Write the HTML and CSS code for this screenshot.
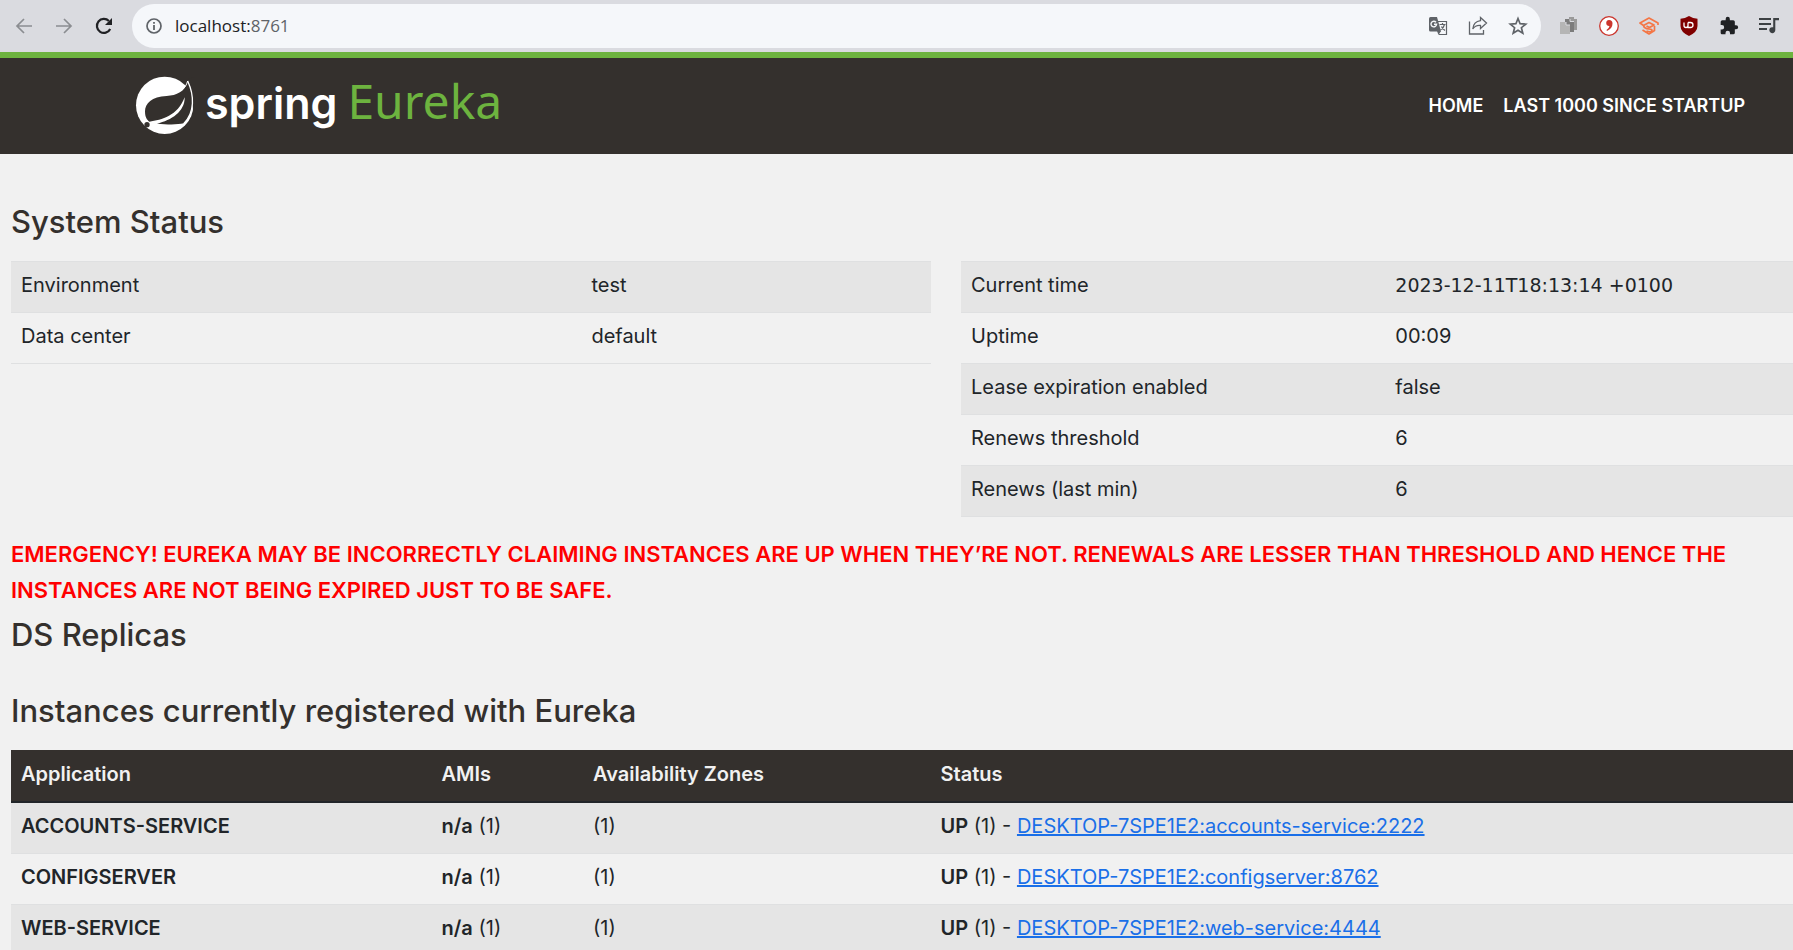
FILE: index.html
```html
<!DOCTYPE html>
<html lang="en">
<head>
<meta charset="utf-8">
<title>Eureka</title>
<link rel="stylesheet" href="styles.css">
</head>
<body>
<div class="browser-bar">
  <div class="nav-buttons">
    <button class="icon-btn" aria-label="Back"><svg width="20" height="20" viewBox="0 0 20 20" fill="none" stroke="#8b8d91" stroke-width="1.7"><path d="M18 10H3M10 3L3 10l7 7"/></svg></button>
    <button class="icon-btn" aria-label="Forward"><svg width="20" height="20" viewBox="0 0 20 20" fill="none" stroke="#8b8d91" stroke-width="1.7"><path d="M2 10h15M10 3l7 7-7 7"/></svg></button>
    <button class="icon-btn" aria-label="Reload"><svg width="20" height="20" viewBox="0 0 20 20"><path d="M16.2 13a7 7 0 1 1-1.3-8" fill="none" stroke="#202124" stroke-width="2.2"/><path d="M18 2v7h-7z" fill="#202124"/></svg></button>
  </div>
  <div class="address">
    <svg width="18" height="18" viewBox="0 0 18 18"><circle cx="9" cy="9" r="7" fill="none" stroke="#5f6368" stroke-width="1.7"/><path d="M8.1 8h1.8v5H8.1zM8.1 5h1.8v1.8H8.1z" fill="#5f6368"/></svg>
    <span class="url">localhost:<span class="port">8761</span></span>
    <div class="address-actions">
      <button class="icon-btn" aria-label="Translate"><svg width="20" height="20" viewBox="0 0 20 20"><path d="M9.5 5.500h9v13h-7.500" fill="none" stroke="#5f6368" stroke-width="1.200"/><path d="M2.500 1h6.500l4 14.500H2.500Q1 15.500 1 14v-11.500Q1 1 2.500 1z" fill="#5f6368"/><path d="M9 15h4l-2.500 4z" fill="#5f6368"/><path d="M8 6.300A2.800 2.800 0 1 0 8.600 8.300H6" fill="none" stroke="#f5f7fa" stroke-width="1.400"/><path d="M11.500 8.500h6M14.500 7v1.500M16.500 8.500q-1 4-4 5.500M13.500 10.500q1 2.500 3.500 4" fill="none" stroke="#5f6368" stroke-width="1.200"/></svg></button>
      <button class="icon-btn" aria-label="Share"><svg width="20" height="20" viewBox="0 0 20 20" fill="none" stroke="#5f6368" stroke-width="1.300"><path d="M1.500 5.500v12.500h14V14"/><path d="M12.500 1.500l6 5.500-6 5.500V9.500Q7.500 9 4.800 13 5.500 5.500 12.500 4.700z"/></svg></button>
      <button class="icon-btn" aria-label="Bookmark"><svg width="20" height="20" viewBox="0 0 20 20" fill="none" stroke="#5f6368" stroke-width="1.700"><path d="M10 2.500l2.100 5.200 5.600.4-4.300 3.600 1.400 5.500L10 14.200l-4.800 3 1.400-5.500L2.300 8.100l5.600-.4z"/></svg></button>
    </div>
  </div>
  <div class="extensions">
    <button class="icon-btn" aria-label="Pages"><svg width="20" height="20" viewBox="0 0 20 20"><path d="M10 1h5v2h3v11h-8z" fill="#9a9a9a"/><path d="M6 3h5v2h4v11H6z" fill="#7c7c7c"/><path d="M1 6h6v3h4v9H1z" fill="#b5b5b5"/><path d="M7 6v3h4M11 3v2.500h4" fill="none" stroke="#dadbe0"/></svg></button>
    <button class="icon-btn" aria-label="Comma"><svg width="20" height="20" viewBox="0 0 20 20"><circle cx="10" cy="10" r="9.300" fill="#fff" stroke="#cb352d" stroke-width="1.300"/><path d="M10 4a3 3 0 1 0 .5 6Q10 12.500 7.500 14l.5 1q5.500-2.500 5.500-7.500Q13.500 4 10 4z" fill="#cb352d"/></svg></button>
    <button class="icon-btn" aria-label="Scholar"><svg width="20" height="20" viewBox="0 0 20 20" fill="none" stroke="#f47645" stroke-width="1.700" stroke-linejoin="round"><path d="M19 9V7L10 2 1 7l3.500 2.500 5.500-3 5 2.500-4.500 2.500L7.500 10M4.500 9.500q.5 3 5.500 3.500 4 .2 2.500 2-1.500 1.500-5 0M3.500 14L10 18l5.500-3.500V10"/></svg></button>
    <button class="icon-btn" aria-label="Blocker"><svg width="20" height="20" viewBox="0 0 20 20"><path d="M10 0q4 2.500 8.500 2.800V10q0 6-8.500 10Q1.500 16 1.500 10V2.800Q6 2.500 10 0z" fill="#800000"/><path d="M5 6.500v3q0 2 2 2t2-2v-3v5h2.500a2.500 2.500 0 0 0 0-5H9" fill="none" stroke="#fff" stroke-width="1.300"/></svg></button>
    <button class="icon-btn" aria-label="Extensions"><svg width="20" height="20" viewBox="0 0 24 24"><path d="M20.500 11H19V7a2 2 0 0 0-2-2h-4V3.500a2.500 2.500 0 0 0-5 0V5H4a2 2 0 0 0-2 2v3.800h1.500a2.700 2.700 0 0 1 0 5.400H2V20c0 1.100.9 2 2 2h3.800v-1.500a2.700 2.700 0 0 1 5.400 0V22H17a2 2 0 0 0 2-2v-4h1.500a2.500 2.500 0 0 0 0-5z" fill="#202124"/></svg></button>
    <button class="icon-btn" aria-label="Media"><svg width="20" height="20" viewBox="0 0 20 20"><path d="M0 3h12M0 8h12M0 13h8" stroke="#3c4043" stroke-width="1.900"/><path d="M14.200 2H20v2.200h-3.700V14a3 3 0 1 1-2.100-2.700z" fill="#3c4043"/></svg></button>
  </div>
</div>
<header class="site-header">
  <a class="logo" href="#" aria-label="Spring Eureka">
    <svg class="leaf" width="60" height="60" viewBox="0 0 180 180">
      <circle cx="89" cy="88" r="86" fill="#fff"/>
      <path d="M158 10L190 0V100H174Q172 50 158 15z" fill="#34302d"/>
      <path d="M158 15C150 48 125 58 95 60C50 62 30 82 30 106C30 124 36 132 43 137C80 132 128 120 149 64C150 106 110 133 66 143C100 146 128 146 146 142C182 110 176 55 158 15z" fill="#34302d"/>
      <path d="M158 15C178 58 180 110 146 143" fill="none" stroke="#fff" stroke-width="4"/>
      <path d="M158 15C154 28 150 34 143 40" fill="none" stroke="#fff" stroke-width="3"/>
      <circle cx="36" cy="146" r="8" fill="#34302d"/>
    </svg>
    <span class="spring">spring</span><span class="eureka">Eureka</span>
  </a>
  <nav class="site-nav"><a href="#">HOME</a><a href="#">LAST 1000 SINCE STARTUP</a></nav>
</header>
<main class="content">
  <h1 class="title">System Status</h1>
  <div class="status-grid">
    <table class="data-table env-table">
      <tbody><tr><td>Environment</td><td>test</td></tr><tr><td>Data center</td><td>default</td></tr></tbody>
    </table>
    <table class="data-table time-table">
      <tbody>
        <tr><td>Current time</td><td class="timestamp">2023-12-11T18:13:14 +0100</td></tr>
        <tr><td>Uptime</td><td>00:09</td></tr>
        <tr><td>Lease expiration enabled</td><td>false</td></tr>
        <tr><td>Renews threshold</td><td>6</td></tr>
        <tr><td>Renews (last min)</td><td>6</td></tr>
      </tbody>
    </table>
  </div>
  <p class="warning">EMERGENCY! EUREKA MAY BE INCORRECTLY CLAIMING INSTANCES ARE UP WHEN THEY’RE NOT. RENEWALS ARE LESSER THAN THRESHOLD AND HENCE THE INSTANCES ARE NOT BEING EXPIRED JUST TO BE SAFE.</p>
  <h1 class="title replicas">DS Replicas</h1>
  <h1 class="title">Instances currently registered with Eureka</h1>
  <table class="data-table instances">
    <thead><tr><th class="col-app">Application</th><th class="col-ami">AMIs</th><th class="col-zone">Availability Zones</th><th>Status</th></tr></thead>
    <tbody>
      <tr><td><b>ACCOUNTS-SERVICE</b></td><td><b>n/a</b> (1)</td><td>(1)</td><td><b>UP</b> (1) - <a href="#">DESKTOP-7SPE1E2:accounts-service:2222</a></td></tr>
      <tr><td><b>CONFIGSERVER</b></td><td><b>n/a</b> (1)</td><td>(1)</td><td><b>UP</b> (1) - <a href="#">DESKTOP-7SPE1E2:configserver:8762</a></td></tr>
      <tr><td><b>WEB-SERVICE</b></td><td><b>n/a</b> (1)</td><td>(1)</td><td><b>UP</b> (1) - <a href="#">DESKTOP-7SPE1E2:web-service:4444</a></td></tr>
    </tbody>
  </table>
</main>
</body>
</html>
```
FILE: styles.css
```css
* { box-sizing: border-box; }
body { margin: 0; background: #f1f1f1; color: #212529; font: 20px/30px Inter, sans-serif; overflow: hidden; }
b { font-weight: 600; }
.browser-bar { display: flex; align-items: center; gap: 18px; height: 52px; padding: 0 14px; background: #dadbe0; }
.nav-buttons, .extensions, .address-actions { display: flex; align-items: center; gap: 20px; }
.icon-btn { display: flex; padding: 0; border: 0; background: none; }
.address { display: flex; align-items: center; gap: 12px; flex: 1; height: 44px; padding: 0 13px; border-radius: 22px; background: #f5f7fa; }
.url { flex: 1; font: 17px/24px "Open Sans", sans-serif; color: #202124; }
.port { color: #5f6368; }
.site-header { display: flex; align-items: center; justify-content: space-between; height: 102px; padding: 0 48px 0 135px; border-top: 6px solid #6db33f; background: #34302d; }
.logo { display: flex; align-items: flex-start; text-decoration: none; }
.spring { margin-left: 10px; font: 600 43px/54px Inter, sans-serif; color: #fff; }
.eureka { margin-left: 10px; font: 48px/50px "Noto Sans", sans-serif; color: #6db33f; }
.site-nav { display: flex; gap: 20px; font: 600 18px/24px Inter, sans-serif; }
.site-nav a { color: #fff; text-decoration: none; }
.content { padding: 49px 0 0 11px; }
.title { margin: 0 0 20px; font: 500 31px/38px Inter, sans-serif; color: #34302d; }
.replicas { margin-bottom: 38px; }
.status-grid { display: grid; grid-template-columns: 920fr 832fr; column-gap: 30px; align-items: start; }
.data-table { width: 100%; border-collapse: collapse; table-layout: fixed; }
.data-table td, .data-table th { padding: 8px 10px 12px; text-align: left; border-top: 1px solid #dfe0e1; border-bottom: 1px solid #dfe0e1; }
.data-table tbody tr:nth-child(odd) { background: #e5e5e5; }
.data-table .timestamp { font: 19px/30px "DejaVu Sans", sans-serif; }
.env-table td:first-child { width: 62%; }
.time-table td:first-child { width: 51%; }
.warning { margin: 19px 0 8px; color: #f00; font: 600 22px/36px Inter, sans-serif; }
.instances .col-app { width: 23.6%; }
.instances .col-ami { width: 8.5%; }
.instances .col-zone { width: 19.5%; }
.instances th { border-top-color: #34302d; border-bottom: 2px solid #212529; background: #34302d; color: #f1f1f1; font-weight: 600; }
.instances a { color: #1a6fe8; }
```
